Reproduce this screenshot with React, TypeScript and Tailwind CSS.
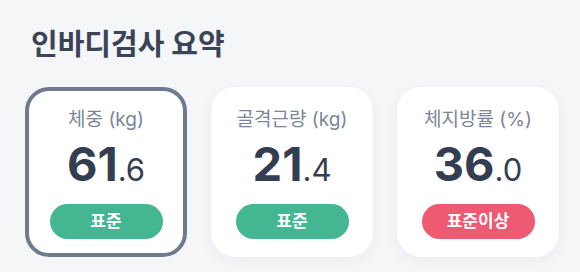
import React from "react";

const items = [
  { label: "체중 (kg)", int: "61", dec: ".6", badge: "표준", color: "bg-[#44b692]", selected: true },
  { label: "골격근량 (kg)", int: "21", dec: ".4", badge: "표준", color: "bg-[#44b692]", selected: false },
  { label: "체지방률 (%)", int: "36", dec: ".0", badge: "표준이상", color: "bg-[#ee5a72]", selected: false },
];

export default function App() {
  return (
    <div
      className="w-[580px] h-[272px] bg-[#f5f6f8] pl-[25px] pt-[26px] overflow-hidden"
      style={{ fontFamily: '"Inter", "Noto Sans CJK KR", sans-serif' }}
    >
      <h1 className="text-[29px] leading-[38px] font-bold text-[#3a4457] pl-[6px]">인바디검사 요약</h1>
      <div className="flex gap-[24px] mt-[23px]">
        {items.map((it) => (
          <div
            key={it.label}
            className={`w-[162px] h-[170px] rounded-[24px] bg-white flex flex-col items-center shrink-0 ${
              it.selected ? "border-[4px] border-[#6e7b8f] pt-[17px]" : "shadow-[0_4px_14px_rgba(30,40,60,0.05)] pt-[21px]"
            }`}
          >
            <div className="text-[19px] leading-[24px] text-[#7b8698]">{it.label}</div>
            <div className="mt-[8px] flex items-baseline text-[#343e52] leading-[48px]">
              <span className="text-[47px] font-bold">{it.int}</span>
              <span className="text-[31px]">{it.dec}</span>
            </div>
            <div
              className={`mt-[10px] w-[113px] h-[35px] rounded-full ${it.color} text-white text-[17px] font-bold flex items-center justify-center`}
            >
              {it.badge}
            </div>
          </div>
        ))}
      </div>
    </div>
  );
}
